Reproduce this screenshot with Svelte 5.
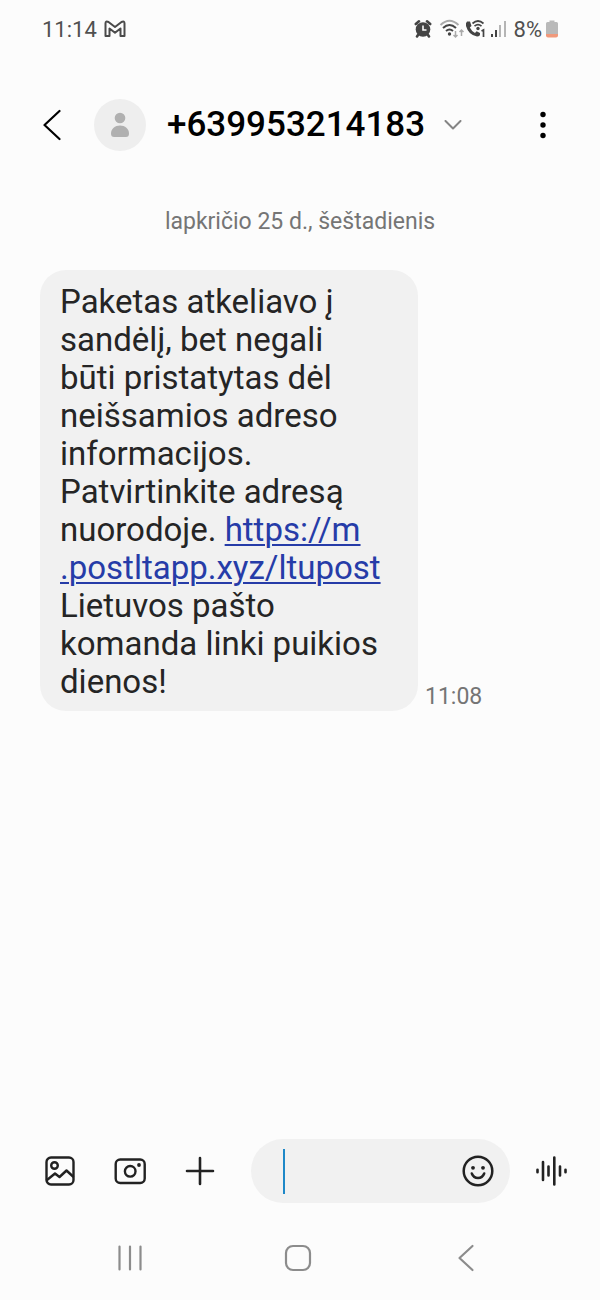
<script>
  let draft = $state('');

  const sender = '+639953214183';
  const sentAt = '11:08';
</script>

<div class="screen">
  <div class="status-bar">
    <span>11:14</span>
    <svg class="mail" width="22" height="18" viewBox="0 0 22 18" fill="none" stroke="#4a4a4a" stroke-width="2" stroke-linejoin="round">
      <path d="M1.500 3.500 Q1.500 0.500 4.500 2 L11 7 L17.500 2 Q20.500 0.500 20.500 3.500 V16 H16.500 V8.500 L11 12.800 L5.500 8.500 V16 H1.500 Z" />
    </svg>
    <span class="spacer"></span>
    <svg width="18" height="20" viewBox="0 0 18 20">
      <circle cx="9" cy="10.500" r="7.300" fill="#444" />
      <path d="M1.800 5 L5 2.300 M16.200 5 L13 2.300 M4 16 L3 17.500 M14 16 L15 17.500" stroke="#444" stroke-width="2.600" stroke-linecap="round" />
      <path d="M9 6.500 V11 H12.500" fill="none" stroke="#fcfcfc" stroke-width="1.600" />
    </svg>
    <svg class="wifi" width="26" height="20" viewBox="0 0 26 20" fill="none" stroke-width="2">
      <path d="M1.500 6 Q10.500 -2.500 19.500 6" stroke="#aaa" />
      <path d="M4 9 Q10.500 3 17 9" stroke="#444" />
      <path d="M7 12 Q10.500 9 14 12" stroke="#444" />
      <circle cx="10.500" cy="15" r="1.700" fill="#444" />
      <path d="M16.500 12 V18 M14.500 16 L16.500 18 L18.500 16 M22.500 17 V11 M20.500 13 L22.500 11 L24.500 13" stroke="#aaa" stroke-width="1.500" />
    </svg>
    <svg width="21" height="20" viewBox="0 0 21 20" fill="none">
      <path d="M2 2.500 L5 2.500 L6.500 7 L4.800 8.500 Q6.500 12 10 14 L11.600 12.200 L15 14 Q15.500 17.500 12 17.500 Q3.500 16 1 7 Q0.500 3.500 2 2.500 Z" fill="#444" />
      <path d="M7.500 4.500 Q13 -0.500 18.500 4.500 M9.500 7.200 Q13 4.200 16.500 7.200" stroke="#444" stroke-width="1.700" />
      <circle cx="13" cy="9.500" r="1.700" fill="#444" />
      <path d="M16.500 12 L18.500 11 V18" stroke="#444" stroke-width="1.700" />
    </svg>
    <svg class="signal" width="16" height="18" viewBox="0 0 16 18">
      <rect x="0" y="14" width="2" height="3" fill="#444" />
      <rect x="4" y="10" width="2" height="7" fill="#444" />
      <rect x="8" y="5" width="2" height="12" fill="#b5b5b5" />
      <rect x="13" y="1" width="2" height="16" fill="#b5b5b5" />
    </svg>
    <span class="percent">8%</span>
    <svg width="12" height="18" viewBox="0 0 12 18">
      <path d="M3.500 0.500 H8.500 V2 H10.500 Q12 2 12 3.500 V14 H0 V3.500 Q0 2 1.500 2 H3.500 Z" fill="#b9b9b9" />
      <path d="M0 14 H12 V15.500 Q12 17.500 10 17.500 H2 Q0 17.500 0 15.500 Z" fill="#f0997c" />
    </svg>
  </div>

  <header>
    <button aria-label="Atgal">
      <svg width="18" height="32" viewBox="0 0 18 32" fill="none" stroke="#000" stroke-width="2.200" stroke-linecap="round" stroke-linejoin="round">
        <path d="M16.500 2 L1.500 16 L16.500 30" />
      </svg>
    </button>
    <div class="avatar">
      <svg width="20" height="26" viewBox="0 0 20 26" fill="#b0b0b0">
        <circle cx="10" cy="6" r="5.300" />
        <path d="M1 21.500 C1 17 5 13.500 10 13.500 S19 17 19 21.500 Q19 25 16 25 H4 Q1 25 1 21.500 Z" />
      </svg>
    </div>
    <h1>{sender}</h1>
    <button class="details" aria-label="Kontakto informacija">
      <svg width="18" height="10" viewBox="0 0 18 10" fill="none" stroke="#858585" stroke-width="2" stroke-linecap="round" stroke-linejoin="round">
        <path d="M1.500 1 L9 8.500 L16.500 1" />
      </svg>
    </button>
    <span class="spacer"></span>
    <button aria-label="Daugiau parinkčių">
      <svg width="6" height="28" viewBox="0 0 6 28" fill="#000">
        <circle cx="3" cy="3.500" r="2.700" />
        <circle cx="3" cy="14" r="2.700" />
        <circle cx="3" cy="24.500" r="2.700" />
      </svg>
    </button>
  </header>

  <main>
    <p class="date">lapkričio 25 d., šeštadienis</p>
    <div class="message">
      <p class="bubble">
        Paketas atkeliavo į sandėlį, bet negali būti pristatytas dėl neišsamios adreso informacijos. Patvirtinkite adresą nuorodoje.
        <a href="#link">https://m<wbr />.postltapp.xyz/ltupost</a>
        Lietuvos pašto komanda linki puikios dienos!
      </p>
      <time>{sentAt}</time>
    </div>
  </main>

  <div class="composer">
    <button aria-label="Galerija">
      <svg width="32" height="32" viewBox="0 0 32 32" fill="none" stroke="#222" stroke-width="2.400" stroke-linecap="round" stroke-linejoin="round">
        <rect x="2.500" y="2.500" width="27" height="27" rx="4.500" />
        <circle cx="10.500" cy="10.500" r="3.300" />
        <path d="M3 25 L11 18.500 L15.500 22 L22.500 15.500 L29 21.500" />
      </svg>
    </button>
    <button aria-label="Kamera">
      <svg width="32" height="32" viewBox="0 0 32 32" fill="none" stroke="#222" stroke-width="2.400">
        <rect x="1.700" y="4.500" width="29" height="23.500" rx="4.500" />
        <circle cx="16.200" cy="16.300" r="5.300" />
        <circle cx="25" cy="10" r="1.900" fill="#222" stroke="none" />
      </svg>
    </button>
    <button aria-label="Pridėti">
      <svg width="32" height="32" viewBox="0 0 32 32" fill="none" stroke="#222" stroke-width="2.600" stroke-linecap="round">
        <path d="M16 3 V29 M3 16 H29" />
      </svg>
    </button>
    <div class="field">
      <span class="caret"></span>
      <input type="text" aria-label="Žinutė" bind:value={draft} />
      <button aria-label="Jaustukai">
        <svg width="32" height="32" viewBox="0 0 32 32" fill="none" stroke="#222" stroke-width="2.500" stroke-linecap="round">
          <circle cx="16" cy="16" r="14.300" />
          <circle cx="11" cy="12.800" r="1.900" fill="#222" stroke="none" />
          <circle cx="21" cy="12.800" r="1.900" fill="#222" stroke="none" />
          <path d="M9.800 18.500 Q11.500 23 16 23 T22.200 18.500" />
        </svg>
      </button>
    </div>
    <button aria-label="Balso įrašas">
      <svg width="32" height="32" viewBox="0 0 32 32" fill="none" stroke="#222" stroke-width="2.600" stroke-linecap="round">
        <path d="M1.500 14.800 V17.200 M7 7 V25 M12.500 11.500 V20.500 M18.300 2.500 V29.500 M24 11.500 V20.500 M29.500 14.800 V17.200" />
      </svg>
    </button>
  </div>

  <nav>
    <button aria-label="Naujausios">
      <svg width="28" height="28" viewBox="0 0 28 28" stroke="#8c8c8c" stroke-width="2.200" stroke-linecap="round">
        <path d="M3.500 2.500 V25.500 M14 2.500 V25.500 M24.500 2.500 V25.500" />
      </svg>
    </button>
    <button aria-label="Pradžia">
      <svg width="28" height="28" viewBox="0 0 28 28" fill="none" stroke="#8c8c8c" stroke-width="2.200">
        <rect x="2" y="2" width="24" height="24" rx="7" />
      </svg>
    </button>
    <button aria-label="Grįžti">
      <svg width="28" height="28" viewBox="0 0 28 28" fill="none" stroke="#8c8c8c" stroke-width="2.200" stroke-linecap="round" stroke-linejoin="round">
        <path d="M20.500 2 L7.500 14 L20.500 26" />
      </svg>
    </button>
  </nav>
</div>

<style>
  :global(body) {
    margin: 0;
    background: #fcfcfc;
  }

  .screen {
    min-height: 100vh;
    display: flex;
    flex-direction: column;
    font-family: Roboto, 'Noto Sans', sans-serif;
    color: #252525;
    background: #fcfcfc;
  }

  svg {
    display: block;
    flex: none;
  }

  button {
    padding: 0;
    border: 0;
    background: none;
    cursor: pointer;
  }

  h1,
  p {
    margin: 0;
  }

  .spacer {
    flex: 1;
  }

  .status-bar {
    display: flex;
    align-items: center;
    height: 58px;
    padding: 0 42px;
    font-size: 22px;
    color: #505050;
  }

  .mail {
    margin-left: 7px;
  }

  .wifi {
    margin-left: 7px;
  }

  .signal {
    margin-left: 5px;
  }

  .percent {
    margin: 0 4px 0 7px;
  }

  header {
    display: flex;
    align-items: center;
    height: 134px;
    padding: 0 54px 0 43px;
  }

  .avatar {
    display: flex;
    align-items: center;
    justify-content: center;
    width: 52px;
    height: 52px;
    margin: 0 21px 0 33px;
    border-radius: 50%;
    background: #eee;
  }

  h1 {
    font-size: 35px;
    line-height: 40px;
    font-weight: 500;
    color: #000;
  }

  .details {
    margin-left: 19px;
  }

  main {
    flex: 1;
    padding: 16px 40px;
  }

  .date {
    font-size: 23px;
    line-height: 28px;
    text-align: center;
    color: #757575;
  }

  .message {
    display: flex;
    align-items: flex-end;
    margin-top: 34px;
  }

  .bubble {
    box-sizing: border-box;
    width: 378px;
    padding: 13px 36px 10px 20px;
    border-radius: 26px;
    font-size: 33px;
    line-height: 38px;
    background: #f1f1f1;
  }

  .bubble a {
    color: #263ca8;
    text-decoration-thickness: 2px;
    text-underline-offset: 3px;
  }

  time {
    margin-left: 7px;
    font-size: 23px;
    line-height: 28px;
    color: #757575;
  }

  .composer {
    display: flex;
    align-items: center;
    gap: 38px;
    padding: 0 32px 0 44px;
  }

  .field {
    flex: 1;
    min-width: 0;
    display: flex;
    align-items: center;
    height: 64px;
    margin: 0 -12px 0 -3px;
    padding: 0 16px 0 32px;
    border-radius: 32px;
    background: #f1f1f1;
  }

  .caret {
    flex: none;
    width: 2px;
    height: 45px;
    background: #1e88c8;
  }

  input {
    flex: 1;
    min-width: 0;
    padding: 0;
    border: 0;
    outline: none;
    font: inherit;
    font-size: 33px;
    color: inherit;
    background: none;
  }

  nav {
    display: flex;
    align-items: center;
    justify-content: space-between;
    height: 84px;
    margin-top: 13px;
    padding: 0 120px 0 116px;
  }
</style>
